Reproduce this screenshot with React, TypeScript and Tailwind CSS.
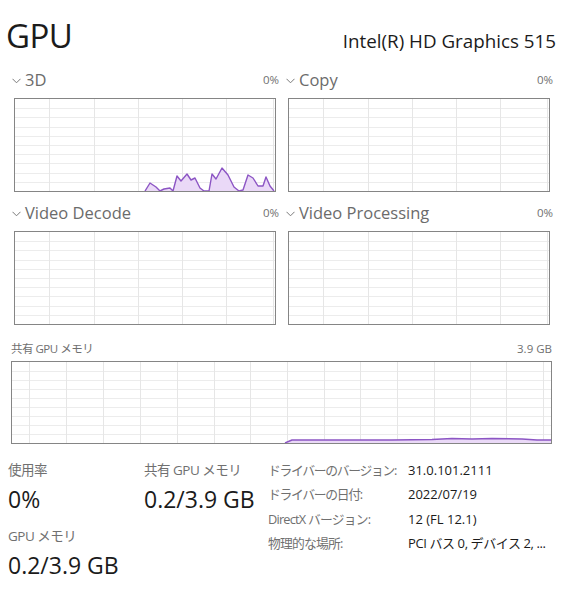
import React from 'react';

type GraphProps = {
  w: number;
  h: number;
  cols: number[];
  rows: number;
  points?: [number, number][];
};

const Graph: React.FC<GraphProps> = ({ w, h, cols, rows, points }) => {
  const area = points ? `M${points[0][0]},${h} ` + points.map(p => `L${p[0]},${p[1]}`).join(' ') + ` L${points[points.length - 1][0]},${h} Z` : '';
  const line = points ? points.map((p, i) => `${i ? 'L' : 'M'}${p[0]},${p[1]}`).join(' ') : '';
  return (
    <svg width={w} height={h} viewBox={`0 0 ${w} ${h}`} className="block">
      {Array.from({ length: rows - 1 }).map((_, i) => (
        <line key={'r' + i} x1={0} x2={w} y1={Math.round(((i + 1) * h) / rows) + 0.5} y2={Math.round(((i + 1) * h) / rows) + 0.5} stroke="#ececec" strokeWidth={1} />
      ))}
      {cols.map(c => (
        <line key={'c' + c} x1={c + 0.5} x2={c + 0.5} y1={0} y2={h} stroke="#e6e6e6" strokeWidth={1} />
      ))}
      {points && (
        <>
          <path d={area} fill="#ead9f7" />
          <path d={line} fill="none" stroke="#8c55c4" strokeWidth={1.4} strokeLinejoin="round" />
        </>
      )}
    </svg>
  );
};

const Chevron = () => (
  <svg width="9" height="6" viewBox="0 0 9 6" className="mr-[4px] mt-[2px]">
    <polyline points="0.5,0.8 4.5,4.8 8.5,0.8" fill="none" stroke="#7a7a7a" strokeWidth="1" />
  </svg>
);

const d3: [number, number][] = [
  [130, 92], [135, 84], [141, 88], [145, 92], [149, 90], [155, 89], [158, 92], [162, 77], [166, 82],
  [172, 75], [176, 81], [180, 79], [185, 89], [189, 92], [194, 92], [197, 75], [201, 80], [207, 69],
  [213, 76], [219, 88], [224, 92], [228, 91], [233, 76], [238, 79], [243, 87], [248, 87], [251, 78],
  [255, 87], [259, 92],
];

const shared: [number, number][] = [
  [273, 81], [280, 78], [380, 78], [420, 77.5], [440, 76.5], [460, 77], [480, 76.5], [510, 77], [525, 78], [539, 78],
];

const smallCols = [34, 79, 123, 167, 211, 258];
const wideCols = [17, 54, 91, 128, 165, 202, 238, 275, 312, 348, 385, 422, 458, 494, 531];

const Panel: React.FC<{ label: string; points?: [number, number][] }> = ({ label, points }) => (
  <div>
    <div className="flex h-[20px] items-center justify-between -ml-[2px] -mr-[3px]">
      <div className="flex items-center text-[16.5px] text-[#6b6b6b]">
        <Chevron />
        {label}
      </div>
      <div className="text-[11.5px] text-[#707070]">0%</div>
    </div>
    <div className="mt-[8px] border border-[#858585] w-[262px] h-[94px]">
      <Graph w={260} h={92} cols={smallCols} rows={10} points={points} />
    </div>
  </div>
);

const info: [string, string, string, string][] = [
  ['ドライバーのバージョン:', '31.0.101.2111', 'tracking-[-1.3px]', ''],
  ['ドライバーの日付:', '2022/07/19', 'tracking-[-1.3px]', ''],
  ['DirectX バージョン:', '12 (FL 12.1)', 'tracking-[-0.8px]', ''],
  ['物理的な場所:', 'PCI バス 0, デバイス 2, ...', 'tracking-[-0.8px]', 'tracking-[-0.4px]'],
];

export default function App() {
  return (
    <div className="w-[580px] h-[595px] overflow-hidden bg-white text-[#1b1b1b] font-['Open_Sans','Noto_Sans_CJK_JP',sans-serif]">
      <div className="flex items-end justify-between pl-[6px] pr-[24px] pt-[14px] h-[56px]">
        <h1 className="text-[33px] leading-[40px] tracking-[-0.5px]">GPU</h1>
        <div className="text-[18.8px] leading-[24px] pb-[3px]">Intel(R) HD Graphics 515</div>
      </div>

      <div className="grid grid-cols-[262px_262px] gap-x-[12px] gap-y-[11px] pl-[14px] mt-[14px]">
        <Panel label="3D" points={d3} />
        <Panel label="Copy" />
        <Panel label="Video Decode" />
        <Panel label="Video Processing" />
      </div>

      <div className="mx-[11px] w-[541px] mt-[15px]">
        <div className="flex h-[18px] items-center justify-between text-[11.5px] text-[#707070]">
          <span className="tracking-[-0.5px]">共有 GPU メモリ</span>
          <span>3.9 GB</span>
        </div>
        <div className="mt-[3px] border border-[#858585] h-[83px]">
          <Graph w={539} h={81} cols={wideCols} rows={9} points={shared} />
        </div>
      </div>

      <div className="flex pl-[8px] mt-[14px]">
        <div className="w-[136px]">
          <div className="text-[13.5px] text-[#707070] h-[24px] leading-[24px] tracking-[-0.5px]">使用率</div>
          <div className="text-[23px] h-[34px] leading-[34px]">0%</div>
          <div className="text-[13.5px] text-[#707070] h-[24px] leading-[24px] mt-[8px] tracking-[-0.5px]">GPU メモリ</div>
          <div className="text-[23px] h-[34px] leading-[34px]">0.2/3.9 GB</div>
        </div>
        <div className="w-[124px]">
          <div className="text-[13.5px] text-[#707070] h-[24px] leading-[24px] tracking-[-0.5px]">共有 GPU メモリ</div>
          <div className="text-[23px] h-[34px] leading-[34px] whitespace-nowrap">0.2/3.9 GB</div>
        </div>
        <div className="grid grid-cols-[140px_1fr] auto-rows-[24.5px] text-[13px] whitespace-nowrap">
          {info.map(([k, v, kt, vt]) => (
            <React.Fragment key={k}>
              <div className={`flex items-center h-[24.5px] text-[#707070] text-[12.8px] ${kt}`}>{k}</div>
              <div className={`flex items-center h-[24.5px] ${vt}`}>{v}</div>
            </React.Fragment>
          ))}
        </div>
      </div>
    </div>
  );
}
